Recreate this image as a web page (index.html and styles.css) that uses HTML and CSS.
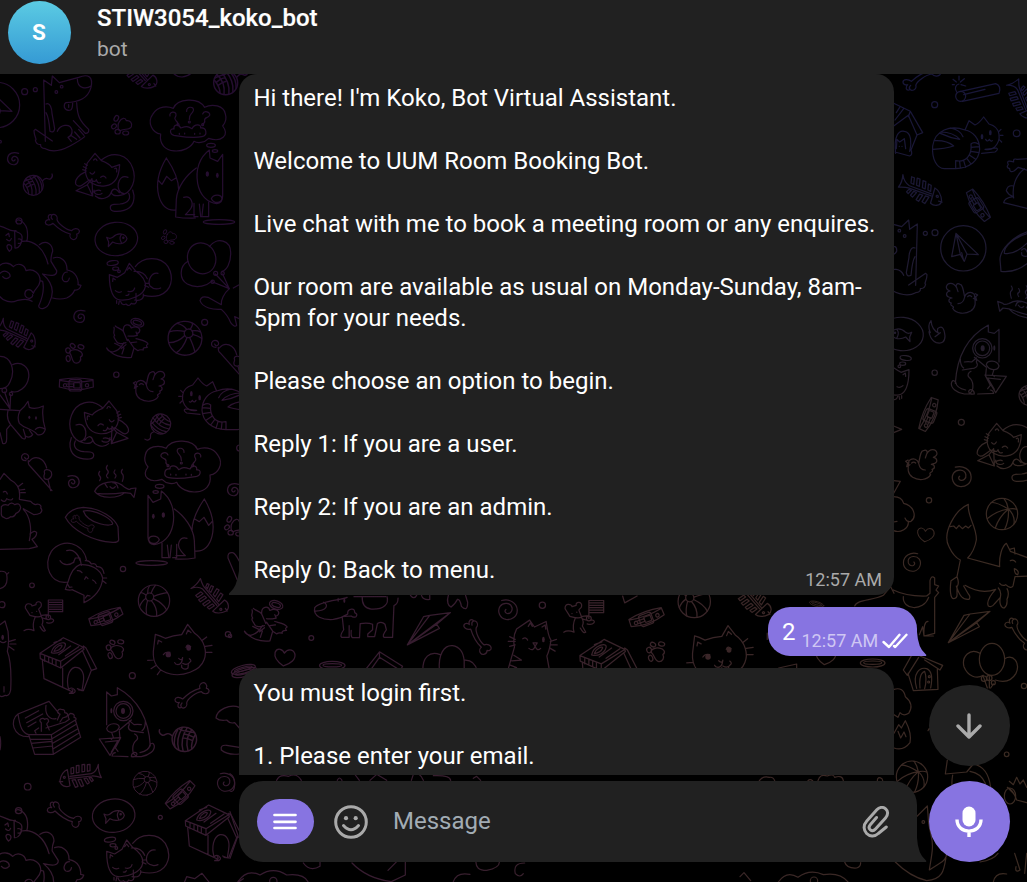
FILE: index.html
```
<!DOCTYPE html>
<html lang="en">
<head>
<meta charset="utf-8">
<title>STIW3054_koko_bot</title>
<link rel="stylesheet" href="styles.css">
</head>
<body>
<div class="app">
<svg class="wallpaper" viewBox="0 0 1027 882" aria-hidden="true">
<defs>
<linearGradient id="base" x1="0" x2="1" y1="0" y2="0"><stop offset="0" stop-color="#34192f"/><stop offset=".35" stop-color="#371c31"/><stop offset=".75" stop-color="#3a2726"/><stop offset="1" stop-color="#3b2b22"/></linearGradient>
<linearGradient id="topLeft" x1="0" x2="0" y1="0" y2="1"><stop offset="0" stop-color="#240d30"/><stop offset=".35" stop-color="#260e30"/><stop offset=".8" stop-color="#34192f" stop-opacity="0"/></linearGradient>
<linearGradient id="topRight" x1="0" x2="0" y1="0" y2="1"><stop offset="0" stop-color="#15143c"/><stop offset=".22" stop-color="#1b1834"/><stop offset=".38" stop-color="#241d2f"/><stop offset=".65" stop-color="#39291f" stop-opacity="0"/></linearGradient>

<g id="bone"><path d="M-30-24C-38-32-31-42-22-38C-18-36-14-30-16-24C-14-12 12 8 28 10C34 2 46 2 50 8C54 15 47 20 43 20C48 30 38 40 30 36C22 32 22 24 24 20C8 16-14 2-28-12C-38-4-50-6-51-14C-51-22-42-24-38-22C-46-30-42-40-34-38"/></g>
<g id="yarn"><circle r="30"/><path d="M-22-20C-8-8-2 10-4 29M-12-27C4-10 10 10 8 28M0-29C14-12 20 6 18 22M-28-6C-20 4-14 16-14 26M-26-12C-14-20 0-18 8-28M-22-2C-12-10-6-12-2-12M-18 6C-10 0-6-2 0-3M12-26C22-14 27-2 26 14M28-14C40-30 44-14 52-20Q60-26 56-34"/></g>
<g id="paw"><path d="M-7-12C-1-24 11-26 14-15C25-17 33-7 29 3C24 14 8 8-2 14C-14 18-12-6-7-12Z"/><ellipse cx="-16" cy="-22" rx="6" ry="9" transform="rotate(30 -16 -22)"/><ellipse cx="-23" cy="2" rx="8" ry="6" transform="rotate(-40 -23 2)"/><ellipse cx="-12" cy="18" rx="8" ry="7"/><ellipse cx="12" cy="22" rx="9" ry="6"/></g>
<g id="ball"><circle r="47"/><circle cx="-13" cy="-11" r="12"/><path d="M-24-17Q-36-26-40-24M-9-22Q-4-36 4-46M-1-13Q24-22 40-24M-2-6Q28 8 38 28M-8 0Q10 20 8 46M-19-1Q-26 22-22 42M-24-7Q-38 2-43 18M-19-21Q-20-36-14-44"/></g>
<g id="beach"><circle r="47"/><path d="M19-15Q-20-38-32-34M19-15Q-16-10-44 14M19-15Q-10 10-20 42M19-15Q22 16 8 46M19-15Q40 4 36 30M19-15Q36-18 44-14M19-15Q16-34 6-46"/></g>
<g id="spiral"><path d="M16-17C0-22-14-18-17-4C-20 10-8 19 4 17C16 14 18-2 8-7C-2-11-8 0-2 5Q4 7 5 2"/></g>
<g id="coil"><path d="M-18-27C4-34 26-20 27 0C28 20 10 30-6 28C-24 24-32 4-23-10C-14-22 8-22 12-6C14 6 4 13-4 10Q-12 5-6-1"/></g>
<g id="collar"><path d="M-50-14Q0-24 50-14L51 8Q0 24-51 8ZM-50-12Q0-2 50-12"/><rect x="-22" y="-14" width="38" height="34" rx="7"/><rect x="-8" y="-5" width="20" height="16" rx="3"/><circle cx="-34" cy="3" r="5"/><circle cx="32" cy="3" r="5"/><path d="M-28-1h20v8h-20"/></g>
<g id="bonefish"><path d="M-60 14C-58-2-48-15-38-18L-30 30C-42 37-60 30-60 14ZM-62 18h10M-30 2L34-6M-30 8L36 1M34-6Q50-12 55-34Q54-12 64 6Q44 0 36 1"/><circle cx="-47" cy="5" r="3"/><path d="M-27-5v-18l8-2v18ZM-11-8v-22l8-1v21ZM6-11v-22l8-1v21ZM22-13v-20l8-1v19ZM-24 13l10 22 8-3-8-20ZM-6 12l10 21 7-3-8-19ZM12 9l10 16 6-4-8-14ZM27 6l8 12 5-4-6-9Z"/></g>
<g id="bird"><path d="M-38-12L-45-8L-39-3L-42 8L-32 2M-35-10C-22-22-8-12-6-2C-2-22 0-40 8-40C18-46 22-36 18-30C28-48 46-46 49-32C49-26 44-22 38-20C50-18 52-6 42-2L32 1C44 2 44 14 34 16C42 24 20 26 30 32C20 50-8 50-24 40C-42 28-38 12-35-10M-6-2Q-2 18 14 18M18-30L14-18M-27-3Q-21-9-15-3"/></g>
<g id="heart"><path d="M-5 24C-20 14-33 0-29-16C-22-31-6-24-2-13C6-26 22-26 28-12C33 4 16 18-5 24Z"/></g>

<g id="fox"><path d="M482 192C458 190 440 158 458 133C474 106 504 108 520 115C532 86 594 80 614 112C636 100 672 106 676 132C680 144 678 156 668 168C690 196 664 218 626 205C612 220 592 220 582 214C566 254 472 258 482 192ZM510 138C506 124 530 122 528 136C526 146 520 142 528 152Q536 158 532 164M560 124C558 108 584 108 580 122C576 134 566 132 568 148M608 132C612 120 632 126 629 136C624 146 612 140 614 152Q616 158 608 162M522 196C508 192 508 174 522 177C520 164 536 160 542 174C560 168 562 168 576 176C584 160 604 162 602 174C620 172 624 196 606 200C576 206 548 200 522 196ZM538 190v3M554 189v3M584 190v3M600 189v3"/><circle cx="534" cy="164" r="3"/><circle cx="568" cy="156" r="3"/><circle cx="608" cy="164" r="3"/><ellipse cx="633" cy="226" rx="13" ry="6"/><ellipse cx="645" cy="243" rx="8" ry="4"/><path d="M499 264C525 302 536 330 536 360M499 264C474 306 468 344 476 376C484 406 502 422 526 420M474 330L486 343L500 319L514 332L529 323M589 294C560 314 532 350 529 388L527 441Q558 446 586 444M628 240C598 262 586 300 593 340C600 378 624 398 650 401C664 400 668 390 668 378V253L653 274L630 264ZM634 386C640 372 664 372 666 386C664 400 642 402 634 386M551 382C572 374 586 402 568 421Q558 432 556 434H584M582 400V440H594M598 402L602 440H612M610 402L606 436M626 396V440H612"/><ellipse class="solid" cx="622" cy="312" rx="5" ry="8"/><ellipse class="solid" cx="652" cy="316" rx="4" ry="8"/><ellipse cx="657" cy="456" rx="47" ry="7"/></g>

<g id="curlcat"><path d="M262 279L285 250L304 272C320 278 330 282 335 292L359 284C358 300 356 316 348 328C334 350 300 354 276 340C256 326 252 302 262 279M304 270C340 240 384 254 398 294C410 326 398 370 360 376Q334 380 334 366C340 352 350 356 358 368M384 322C350 308 344 370 372 371M386 370C394 386 384 400 360 402L342 403C326 405 328 423 344 424C382 426 404 410 402 376L398 360M258 305C236 314 224 330 227 342Q236 354 248 344L268 330M228 362L262 344L278 378ZM262 344L276 326L278 378M282 360C282 378 302 374 306 370M286 378C304 394 330 382 334 366M280 366Q294 358 302 362M344 296Q352 290 350 306M281 270Q288 262 291 272M270 308Q278 318 284 306M302 322Q312 314 318 324M278 332Q286 338 289 329Q292 342 302 338M250 290l10 5M248 299l10 3M254 281l8 5"/></g>

<g id="napcat"><ellipse cx="349" cy="507" rx="64" ry="50" transform="rotate(-6 349 507)"/><path d="M320 502Q330 508 338 502C354 486 376 490 381 506C376 524 352 524 338 516L325 530L326 516ZM364 494Q356 504 364 518"/><circle cx="370" cy="503" r="2"/><ellipse cx="338" cy="579" rx="17" ry="7" transform="rotate(-8 338 579)"/><ellipse cx="347" cy="596" rx="9" ry="5"/><circle cx="357" cy="604" r="4"/><path d="M328 614L352 622Q362 616 374 608L388 580L406 602C432 620 438 636 436 650C432 676 392 692 362 690C336 688 328 660 328 614M338 634L339 624L346 629M382 600L388 592L394 600M406 590C428 560 480 556 504 590C524 624 514 664 478 676Q456 682 432 676M474 610C454 606 442 632 450 648Q464 662 482 654M402 604Q432 602 442 626M346 662Q354 670 364 665M384 664Q400 668 404 654M378 676Q384 678 387 672M408 670V690M436 640l10 0M434 646l12 6M404 690C424 694 432 684 430 672M362 694Q366 708 378 702Q388 712 394 700Q408 706 410 692M350 692l0 8M358 693l-2 10"/></g>

<g id="cloudpup"><path d="M-4 468C20 470 26 486 48 482M48 455C54 440 80 460 82 484Q84 504 80 514M44 482C50 488 66 488 66 500C68 520 56 536 45 534ZM55 520a7 7 0 1 0 0-13M28 544C14 528 24 518 34 528Q38 538 28 544M66 514C100 508 132 534 144 582M118 524C140 508 158 524 158 544Q152 560 153 574L170 602C172 620 150 618 128 612M18 496L26 490L28 500M20 508Q30 518 34 506M-4 590C8 574 30 578 40 590C54 576 74 584 78 602C100 594 122 610 120 634C118 652 104 656 100 670C90 650 70 660 76 678C84 692 100 682 98 674M0 610C14 596 32 608 30 620Q18 632 8 620M96 694C80 682 62 690 50 692C34 700 10 694 0 680M128 612C158 638 164 668 148 698C142 716 118 722 116 708C126 686 134 660 128 634L120 632M160 564C180 556 202 572 201 600C230 604 236 632 234 644L243 646Q238 662 224 660Q218 676 200 684Q180 690 158 684M202 606C188 606 182 628 192 634Q206 638 208 624"/><circle cx="57" cy="453" r="9"/></g>

<g id="house"><path d="M120 190L190 143L250 172L182 214ZM120 190L121 206L182 234L182 214M182 234L252 178L250 172M250 168L258 174L290 236L274 241L248 184M127 210L132 266L188 292V234M134 198v16M146 202v16M157 206v16M168 210v16M206 298C198 270 204 238 224 232C246 230 254 252 250 276L246 302L232 296M274 241L250 302L236 300M188 292L218 306M206 298Q216 290 222 298Q230 304 220 310L208 310Q224 306 216 298M154 188C160 160 200 150 196 166C192 182 172 194 154 188M162 184C166 170 186 160 186 168Q180 182 162 184M176 194L212 168M196 198L236 170M162 158L184 150"/></g>

<g id="catface"><path d="M466 133Q478 136 496 145Q520 136 545 134L563 103L584 130C614 150 622 186 612 210C600 244 546 260 512 252C472 244 458 216 460 184ZM473 162L475 151L485 156M559 132L564 120L573 128M443 211l18-1M453 236l16-10M472 254l10-14M616 169l20-3M616 187l20 0M607 151l13-10M536 205Q546 214 548 203Q546 224 534 224Q526 224 524 218M548 220Q562 228 570 216Q576 212 568 206M545 225V232Q554 242 564 234L565 224"/><ellipse class="solid" cx="505" cy="194" rx="8" ry="8"/><path d="M490 194Q496 184 510 187M558 172Q562 160 572 170"/><ellipse class="solid" cx="566" cy="174" rx="7" ry="8"/></g>

<g id="mouseflag"><path d="M76 54C74 36 96 40 96 48L108 44C106 32 126 32 124 46C124 54 116 54 116 58L124 78C116 84 104 80 90 76ZM106 80Q96 102 102 122Q84 114 72 122M124 80Q132 92 126 104L136 122Q130 128 120 110M126 76L144 74M128 84L142 88M138 82a7 7 0 1 0 14 0a7 7 0 1 0-14 0M145 30V82M145 30H188V65H145M145 37H188M145 44H188M145 51H188M145 58H188M152 86C170 88 158 104 140 98"/><circle class="solid" cx="96" cy="68" r="2"/><circle class="solid" cx="110" cy="64" r="2"/></g>

<g id="sleuth"><path d="M320 306L334 318L352 314V293C408 324 446 380 451 468M320 306V404M320 416C324 432 350 430 358 412C356 398 326 396 320 416M358 420L394 390M386 396L388 404C380 416 390 424 404 424L430 428M436 394Q436 416 426 422M388 392L402 404Q412 402 424 404M336 430L340 442L334 448M358 424L360 444M298 447L362 443L330 496ZM316 456L354 452L334 486M362 443L346 474L354 484M404 432C412 436 416 444 410 450C394 462 396 490 406 496M346 488Q338 488 336 498L384 500M394 500C394 486 408 484 411 492Q410 502 394 500L424 500C448 496 464 482 463 468Q460 454 450 464Q448 482 420 488"/><circle cx="370" cy="363" r="29"/><circle cx="370" cy="363" r="22"/><ellipse class="solid" cx="369" cy="363" rx="6" ry="9"/><ellipse class="solid" cx="334" cy="362" rx="3" ry="8"/></g>

<g id="angel"><path d="M68 68C74 74 86 76 92 84C90 60 112 60 116 74C130 66 146 74 140 86Q132 94 130 86L134 96Q116 100 106 98M64 72C68 84 58 86 66 96C60 100 68 108 70 112C74 124 90 122 100 118M92 84L104 112M66 120L94 134L88 152M130 106C144 110 162 112 166 122Q158 126 164 132Q148 132 152 140Q140 138 136 142L124 134M106 108L124 134L116 162C90 166 58 156 42 134Q46 144 60 146C72 144 86 132 94 118M116 118L132 116M100 124L86 136"/><ellipse cx="134" cy="58" rx="20" ry="12" transform="rotate(18 134 58)"/><ellipse cx="134" cy="58" rx="13" ry="6" transform="rotate(18 134 58)"/></g>

<g id="dog"><path d="M131 30L154 46L157 18L178 38L236 22C266 10 280 22 273 52C264 86 236 96 198 98Q192 100 193 112Q198 124 212 120Q218 116 218 98M206 112v-8M232 26C232 60 262 56 273 48M131 30L136 214M138 102C150 96 156 116 156 130L164 176Q162 190 150 184Q146 140 138 128M230 98C232 140 240 154 266 178Q268 190 256 190L220 152M172 184C180 164 210 158 216 180Q218 196 204 202L214 214M157 213L106 178L102 182C102 198 112 210 106 210Q108 224 122 224Q120 234 136 236C154 246 180 244 210 228Q240 212 254 200M212 196L230 208M224 186L240 204M236 178L252 196"/><circle cx="185" cy="50" r="4"/><circle cx="169" cy="66" r="4"/></g>
<g id="plane"><circle cx="235" cy="535" r="68"/><path d="M213 490L200 560L226 553L238 574L246 552L280 554ZM213 490L226 553M213 490L246 552M230 548L236 572"/></g>
<g id="loaf"><path d="M240 180L252 152L270 165Q282 160 296 141L312 162C350 172 348 210 330 230Q318 242 300 238L334 234Q342 238 330 246L290 250M240 180C196 164 150 180 143 228C140 268 156 296 178 296L212 296C254 294 282 272 284 238C284 206 264 184 240 180M168 186Q204 186 224 208Q196 204 166 190M148 212Q186 210 206 228Q180 236 144 238M196 174Q226 180 234 200M212 296V272C242 278 262 256 258 222Q266 214 280 222M224 274l2 20M236 272l6 20M246 266l12 16M254 256l18 12M258 244l24 4M258 232l24-2M302 208Q308 218 313 208Q318 216 322 212M342 184l6-6M346 196h8M342 208l8 8"/><ellipse class="solid" cx="291" cy="200" rx="4" ry="8"/><ellipse class="solid" cx="316" cy="188" rx="4" ry="8"/></g>
<g id="balloons"><ellipse cx="605" cy="565" rx="42" ry="47" transform="rotate(-20 605 565)"/><path d="M628 530C650 500 694 508 692 552C692 580 680 600 666 604M564 574C536 590 538 628 562 642C592 658 622 646 638 632M646 612L688 656L638 636M668 612L688 656"/><circle cx="647" cy="610" r="6"/><circle cx="668" cy="610" r="5"/><circle cx="638" cy="635" r="5"/></g>
<g id="bowl"><path d="M196 562Q212 534 250 532C304 534 344 566 354 590L356 630Q354 638 338 637C280 634 216 602 196 562M250 543C280 536 332 564 338 580C340 592 264 584 250 543"/><use href="#bone" transform="translate(248 582) scale(.68)"/></g>
<g id="mousey"><path d="M78 392Q62 392 65 378C72 364 90 374 85 384Q78 392 74 382M85 392Q84 404 90 408L156 482M88 394C104 374 132 382 140 414M134 430C128 418 146 414 154 426C158 438 150 446 144 448L152 482M134 430Q126 450 144 448"/></g>
<g id="cookfish"><path d="M284 484C296 456 344 444 374 472Q390 482 392 476L408 474L402 502L392 490L374 488C356 506 300 508 284 484ZM314 460L322 472M338 458Q350 458 354 474M330 470Q338 480 346 470M290 490Q330 494 372 488M299 424q-6 8 0 14t0 14M322 406q-6 8 0 14t0 12t2 12M345 420q-6 8 0 12t0 12M367 418q-6 8 0 14t0 22"/></g>
<g id="paperplane"><path d="M515 174L562 92L580 88L640 80L600 114L608 126ZM515 174L580 88M515 174L640 80M515 174L600 114"/></g>
<g id="foxwalk"><path d="M250 523C210 540 170 610 192 650Q206 680 226 690L216 740L198 752C194 780 196 806 206 806Q218 804 216 790V770Q224 760 216 740M250 523C246 560 276 590 274 630Q268 664 248 684L344 710C342 680 350 650 364 640L376 664L430 684M196 590L206 588L214 596L222 586L232 596L242 588L250 594L258 586M214 768C224 802 236 810 252 808Q258 800 250 792L236 768M240 766C270 784 300 790 332 778M332 778C312 800 304 816 310 828Q320 834 328 822L346 802Q350 784 340 774M346 802C342 820 348 834 358 834Q368 826 366 808Q374 790 366 776M344 760Q352 770 362 764Q378 778 384 768L390 740L430 738M374 658L388 654L390 672M376 692Q386 688 392 696M388 716Q404 722 398 734Q388 732 388 716"/></g>
<g id="bigdog"><path d="M360 34L452 34M340 36C326 44 260 46 246 66C240 92 270 102 300 100Q324 96 342 84Q340 72 352 70Q362 68 362 80Q372 84 366 92Q358 96 352 90L326 92M272 50C286 56 284 74 248 76M384 34Q382 66 410 70C448 72 462 54 456 34M326 94L330 130Q318 148 324 152H346V118M352 132Q350 150 356 153H376L378 112Q400 108 414 114V130L400 142V150H420L428 112Q440 104 450 114L454 130Q440 148 448 152H472L476 60Q488 56 488 38"/><ellipse class="solid" cx="314" cy="43" rx="2" ry="6"/><ellipse class="solid" cx="332" cy="46" rx="3" ry="6"/></g>
<g id="ring"><ellipse rx="37" ry="12"/><ellipse cy="-1" rx="27" ry="5"/></g>
<g id="standcat"><path d="M806 250L826 180Q820 150 832 128L870 102L884 122L918 106Q924 150 932 160Q928 190 920 206L928 250M866 120L872 110L878 120M906 122l9-6 2 12M850 156Q860 150 864 160M868 184Q880 194 886 178Q892 194 902 184M880 168L892 168L886 178ZM812 150l16 8M808 164h20M812 178l16-4M930 164l18-6M930 174h20M930 184l14 8M824 204L846 218L818 220M812 232L832 240L808 250"/><ellipse class="solid" cx="910" cy="158" rx="4" ry="8"/></g>

<mask id="doodles" maskUnits="userSpaceOnUse" x="0" y="0" width="1027" height="882">
<g class="ink">
<g transform="translate(0 70) scale(.33333)">
<use href="#dog"/><use href="#plane" transform="translate(-244 -430)"/><circle cx="74" cy="65" r="9"/><circle cx="106" cy="59" r="6"/>
<use href="#bonefish" transform="translate(417 8) rotate(-125)"/><path d="M520 10Q545 32 574 10"/>
<use href="#yarn" transform="translate(677 38) scale(1.2)"/><use href="#paw" transform="translate(365 167)"/><use href="#fox"/>
<use href="#spiral" transform="translate(40 267)"/><use href="#curlcat"/><use href="#yarn" transform="translate(100 346)"/>
<use href="#bone" transform="translate(187 472)"/><use href="#cloudpup"/><use href="#napcat"/><use href="#paw" transform="translate(507 502) scale(.75)"/>
<use href="#balloons"/><path d="M688 656C672 670 662 690 664 704L624 682Q604 676 600 692C608 714 640 720 664 718Q684 736 692 758Q704 774 710 766L704 740L726 750M700 654L716 645"/>
<use href="#spiral" transform="translate(239 740)"/><circle cx="614" cy="757" r="9"/><circle cx="0" cy="215" r="4"/>
</g>
<g transform="translate(0 330) scale(.33333)">
<use href="#bonefish" transform="translate(52 14) rotate(198) scale(1 -1)"/><use href="#paw" transform="translate(224 70) rotate(80)"/>
<use href="#angel" transform="translate(278 -80)"/><use href="#ball" transform="translate(555 25) scale(1.08) rotate(85)"/>
<use href="#mousey" transform="translate(570 -340)"/><use href="#collar" transform="translate(229 163)"/><circle cx="349" cy="134" r="8"/>
<use href="#bird" transform="translate(445 167)"/><use href="#loaf" transform="matrix(-1 0 0 1 890 3)"/>
<path d="M0 79C32 78 48 120 30 156Q22 176 0 176M38 104C64 92 90 112 86 142C82 172 54 192 34 184M14 186L30 236M32 194L30 236M-2 192L30 236M0 238L60 242Q74 232 84 214L88 232Q106 240 130 228Q124 260 136 298Q130 318 112 314C100 296 76 298 58 280Q50 262 60 242M24 242Q18 266 32 284L66 324Q78 332 76 318L70 298M76 318Q90 326 98 314L88 300M0 308L8 340Q20 344 20 326V298L30 286M106 298Q118 286 136 298"/>
<circle cx="13" cy="181" r="7"/><circle cx="33" cy="192" r="5"/><ellipse class="solid" cx="88" cy="262" rx="3" ry="5"/><ellipse class="solid" cx="108" cy="264" rx="3" ry="5"/>
<use href="#curlcat" transform="matrix(-1 0 0 1 612 -37)"/><use href="#yarn" transform="translate(482 282) scale(-1 1) rotate(75)"/><use href="#fox" transform="matrix(-1 0 0 1 1112 243)"/>
<use href="#mousey"/><use href="#spiral" transform="translate(220 456) scale(-1 1)"/><use href="#cookfish"/><use href="#bowl"/>
<path d="M0 448L12 430L32 450C56 462 62 480 58 506M58 508L92 514Q104 528 112 522Q126 524 122 534Q130 542 120 550Q112 554 102 554L70 536M54 470l14-10M60 480l14-2M62 488h14M10 486Q18 480 22 492M4 510Q16 520 20 506Q34 514 38 506M4 530Q12 520 24 526Q34 514 44 524Q58 516 62 532Q60 546 48 550Q42 564 32 560Q20 570 12 562Q2 560 4 546ZM70 538C92 560 96 600 88 632M90 612Q104 598 110 608Q110 620 96 628L112 650L88 656L0 658"/>
<path d="M204 756C150 764 128 704 154 664C186 622 250 636 260 692M180 692C190 708 210 706 222 696M200 662C220 656 236 672 240 692M204 756L196 778Q210 782 216 779L252 796V818C282 804 306 778 308 744C302 718 272 702 240 704Q216 712 204 756M220 698L226 684H240L244 706M256 692Q268 690 274 702Q288 698 290 710Q308 708 312 730M204 764l4 8 8-1M256 804l6-8 8 2M232 722Q240 720 246 728M278 750Q286 754 288 760M254 748l4-8 6 6M308 744h12M308 752l10 8"/>
<circle cx="369" cy="717" r="8"/><circle cx="96" cy="766" r="7"/><path d="M0 724Q18 722 20 734L26 728M20 734Q26 770 0 776"/>
<use href="#spiral" transform="translate(700 480)"/><use href="#paw" transform="translate(704 590)"/><circle cx="719" cy="354" r="9"/><path d="M712 750L684 684Q682 666 698 668Q706 670 718 694"/>
</g>
<g transform="translate(0 590) scale(.33333)">
<use href="#mouseflag"/><circle cx="6" cy="44" r="9"/><use href="#collar" transform="translate(318 82) rotate(-20)"/>
<use href="#ball" transform="translate(462 32)"/><use href="#bonefish" transform="translate(632 22) rotate(-124)"/><use href="#house"/><use href="#paw" transform="translate(347 178) rotate(70)"/>
<use href="#catface"/><circle cx="684" cy="133" r="8"/><circle cx="397" cy="257" r="9"/><use href="#bone" transform="translate(576 315) scale(1 -1)"/>
<use href="#sleuth"/><path d="M0 104L15 93L24 124Q28 160 22 184C32 210 34 260 32 300Q28 320 16 316Q6 322 0 318M28 154l18-5M30 162l18 0M28 170l14 10M12 290v16M0 154Q10 162 18 154M0 440Q4 460 0 480"/><ellipse class="solid" cx="8" cy="142" rx="4" ry="8"/>
<path d="M85 440C38 440 28 390 54 372L147 334L180 374M54 372C60 410 66 430 86 434L104 493H160L242 442L226 390L154 434H86M154 434L160 493M90 448H152M94 460L156 454M98 474L158 468M156 446L230 402M158 460L234 416M160 476L238 428M138 346C134 370 146 390 168 386M76 384L116 362M80 398L128 372M84 410L108 396M124 424V398C112 390 128 380 134 388Q144 382 146 394L140 402L148 420M172 390L180 372C166 368 174 356 184 358Q196 358 194 368Q208 370 200 380L188 384L180 396M108 430L104 422L116 414M138 414L196 396L208 388Q200 376 212 370Q226 372 222 382Q232 384 226 392"/>
<use href="#yarn" transform="translate(553 448) scale(-1.22 1.22) rotate(10)"/><path d="M718 352C690 340 650 360 648 384Q660 394 680 390Q690 402 704 398L718 414M718 472L680 466Q660 464 664 480C680 494 700 494 718 492"/>
<use href="#ring" transform="translate(730 238) rotate(-15)"/><use href="#bonefish" transform="translate(240 557)"/><use href="#ball" transform="translate(435 580) scale(.77) rotate(80)"/><use href="#collar" transform="translate(542 616) rotate(-43)"/>
<use href="#coil" transform="translate(678 577) scale(.95)"/><circle cx="83" cy="590" r="10"/><circle cx="481" cy="682" r="6"/><use href="#bone" transform="translate(193 675)"/>
<use href="#napcat" transform="translate(-8 170)"/><use href="#cloudpup" transform="translate(-4 209) scale(1.05 1)"/><use href="#house" transform="translate(436 502)"/><path d="M552 880L560 860L584 866L606 850L630 880M712 878L730 866"/>
</g>
<g transform="translate(885 70) scale(.33333)">
<use href="#bone" transform="translate(110 22) scale(1.1 -1)"/><path d="M224 65L332 41Q350 48 342 70L232 94M236 74L300 58M215 66C206 54 214 44 222 42M226 36l12-10M228 44l14 4M222 30v-12M214 36l-10-8M208 44h-6"/><ellipse cx="227" cy="79" rx="15" ry="15"/><circle cx="149" cy="104" r="9"/>
<use href="#bonefish" transform="translate(412 90) rotate(-105)"/><circle cx="395" cy="190" r="10"/><use href="#loaf"/>
<path d="M26 100L76 124L113 188L96 195L70 136L26 168M76 124L70 140M96 195L78 240M32 250C26 200 40 180 58 184C80 186 80 220 74 244M34 236L36 208L44 216L58 206L62 236M78 240Q84 254 74 258L30 246M30 150L56 116M34 128L44 112"/><circle class="solid" cx="43" cy="229" r="2"/><circle class="solid" cx="51" cy="229" r="2"/>
<path d="M430 266L396 268Q384 264 386 276Q362 268 370 284Q362 292 374 296Q374 310 388 302L400 292L430 302M418 296C392 316 380 350 386 384M386 348Q368 344 364 362Q370 374 384 380Q358 384 356 398L430 416"/>
<use href="#bonefish" transform="matrix(-1.05 -.26 -.1 1 108 362)"/><use href="#collar" transform="translate(278 407) rotate(58)"/>
<use href="#dog" transform="matrix(-1 0 0 1 228 432)"/><circle cx="150" cy="488" r="9"/><circle cx="121" cy="490" r="6"/><use href="#plane"/>
<path d="M430 484C380 500 346 540 345 568L348 604Q390 610 430 578M430 490C386 502 356 530 358 550Q390 556 430 516M410 540Q422 530 426 546M410 548Q408 562 428 558"/>
<use href="#bird" transform="matrix(-1 0 0 1 233 683)"/><use href="#cookfish" transform="matrix(-1 -.25 0 1 746 322)"/>
<path d="M138 752Q126 768 136 788C128 770 132 810 154 818Q180 824 180 798Q176 760 158 776Q156 788 162 790Q140 780 138 752M150 800l16-12"/>
</g>
<g transform="translate(885 330) scale(.33333)">
<use href="#napcat" transform="matrix(-1 0 0 1 400 -495)"/><use href="#sleuth" transform="matrix(-1 0 0 1 662 -308)"/><circle cx="149" cy="128" r="8"/><circle cx="229" cy="277" r="9"/>
<use href="#collar" transform="translate(133 254) rotate(-68)"/><use href="#yarn" transform="translate(432 196)"/><path d="M26 288L50 298L26 308M26 452L46 454L26 490M26 500Q50 500 56 520C88 528 96 560 78 574Q66 578 60 564M70 574C72 596 46 610 26 602M26 576l10-2"/>
<use href="#curlcat" transform="translate(50 30)"/><use href="#bird" transform="translate(107 402)"/><use href="#coil" transform="translate(230 440) scale(1.05)"/><circle cx="132" cy="511" r="8"/>
<use href="#beach" transform="translate(351 552)"/><use href="#heart" transform="translate(123 615) scale(.85)"/><use href="#coil" transform="translate(81 697) scale(-.95 .95)"/><use href="#foxwalk"/>
</g>
<g transform="translate(740 560) scale(.33333)">
<path d="M460 90Q500 110 560 108L570 100V62Q574 44 584 54V74L596 78L588 90L596 98L584 112V220L552 228L548 200L538 224M344 138C350 118 400 122 430 106L452 80L462 100M490 110C486 150 550 156 566 112M564 184Q550 184 552 228H580"/>
<use href="#bonefish" transform="translate(40 122) rotate(-124)"/><use href="#ring" transform="translate(230 132) scale(.6) rotate(15)"/><use href="#paperplane" transform="translate(110 74)"/><use href="#bone" transform="translate(838 223) rotate(20)"/>
<ellipse cx="756" cy="298" rx="38" ry="48"/><path d="M720 280C690 262 664 290 672 320C684 350 710 358 730 346M794 296C820 282 842 308 828 340Q808 374 766 360M730 350L742 384M748 350V384M760 372L752 384"/><circle cx="732" cy="356" r="8"/><circle cx="748" cy="354" r="8"/><circle cx="760" cy="368" r="6"/>
<circle cx="852" cy="378" r="8"/><path d="M516 284L490 330L502 346L536 292M540 288L608 316L600 330L554 300M504 340L520 392L594 388L592 328M530 385C516 340 540 320 560 326C580 334 576 364 572 384M540 384Q536 340 554 334Q562 356 554 386"/><circle cx="568" cy="350" r="3"/><circle cx="566" cy="366" r="3"/>
<use href="#heart" transform="translate(258 290)"/><use href="#ring" transform="translate(398 309)"/><path d="M116 324L170 312V324M462 388Q490 380 496 410Q524 432 506 460Q490 470 480 458L474 472L462 464M462 520L476 494L484 504L496 482Q516 520 510 548Q490 574 462 564M474 514L482 534L492 516L498 530"/>
<circle cx="800" cy="583" r="7"/><use href="#beach" transform="translate(516 650)"/><path d="M622 600L616 642L680 636L700 612Q744 620 752 682M638 645Q630 690 650 710M690 634Q724 640 736 670M860 728L830 720Q820 690 802 682L820 700M808 664L820 674L830 652L840 672L850 660L860 682M564 512Q570 500 568 508"/><ellipse cx="810" cy="708" rx="17" ry="24"/>
<path d="M530 770L562 738L566 790L574 830C582 860 574 890 568 930L596 912Q620 900 620 880C612 920 616 958 560 962Q510 950 466 906M824 880L840 930Q824 940 828 920M860 880L854 940M314 906Q320 926 350 924Q362 920 362 908M115 966Q140 930 174 952Q210 926 250 944Q300 936 324 966M760 966Q766 936 800 942M0 950l12-12 20 24M720 906Q760 900 774 880"/><circle cx="222" cy="962" r="11"/><circle cx="550" cy="786" r="4"/>
<path d="M58 662Q70 646 88 652Q100 650 104 662M204 662q6-6 14 0M234 662Q240 640 262 648Q280 640 284 652Q308 644 310 662M412 662q0-14 14-6l2 6"/>
</g>
<g transform="translate(230 585) scale(.3444)">
<use href="#angel"/><use href="#bigdog"/><circle cx="236" cy="154" r="7"/><use href="#heart" transform="translate(160 211)"/><use href="#ring" transform="translate(297 234)"/><use href="#ring" transform="translate(42 254) rotate(-15)"/>
<use href="#paperplane"/><path d="M524 30Q534 44 542 30M556 30Q560 44 580 42V30M634 30C628 48 634 62 642 64Q656 52 660 42Q668 40 672 62Q690 80 690 50L684 30M390 250L434 194L501 236L494 250M434 194V210L406 250M434 210L488 244M560 250C558 210 580 190 610 202M608 250C604 200 622 174 646 176Q676 180 680 220V250M680 218Q710 216 718 250"/>
<use href="#bone" transform="translate(718 152) rotate(28)"/><use href="#coil" transform="translate(807 72)"/><circle cx="907" cy="59" r="9"/><use href="#standcat"/><use href="#mouseflag" transform="translate(897 15)"/><use href="#house" transform="translate(896 15)"/><use href="#collar" transform="translate(1210 96) rotate(-20)"/>
<use href="#paw" transform="translate(1238 194) rotate(70)"/><use href="#ball" transform="translate(1348 48)"/><use href="#catface" transform="translate(883 15)"/><path d="M1140 32L1146 52L1182 32M1560 140v18"/><circle cx="0" cy="148" r="5"/>
</g>
<g transform="translate(230 765) scale(.33333)"><path d="M140 46Q148 26 176 34Q200 22 214 46M322 46q6-14 14 0M376 30L388 46M420 46L440 28L470 46M544 46L550 28Q570 20 580 46M610 32Q660 30 662 46M730 40L740 34L752 46M0 26Q16 36 14 60T0 78M0 140L24 212L0 280M220 294Q240 322 270 304V290M366 294Q410 340 484 350L526 330V290M474 316L500 290M738 290Q736 316 770 316Q810 308 808 290M24 350Q50 310 90 330Q130 304 170 330Q220 324 234 350M670 350Q680 320 720 328M884 294Q848 294 856 326Q870 340 880 326"/><circle cx="130" cy="348" r="11"/></g>
</g>
</mask>
</defs>
<g mask="url(#doodles)"><rect width="1027" height="882" fill="url(#base)"/><rect width="560" height="882" fill="url(#topLeft)"/><rect x="560" width="467" height="882" fill="url(#topRight)"/></g>
</svg>

<header class="header">
<div class="avatar">S</div>
<div class="peer"><div class="name">STIW3054_koko_bot</div><div class="status">bot</div></div>
</header>

<main class="messages">
<article class="bubble incoming first">
<p>Hi there! I'm Koko, Bot Virtual Assistant.</p>
<p>Welcome to UUM Room Booking Bot.</p>
<p>Live chat with me to book a meeting room or any enquires.</p>
<p>Our room are available as usual on Monday-Sunday, 8am-<br>5pm for your needs.</p>
<p>Please choose an option to begin.</p>
<p>Reply 1: If you are a user.</p>
<p>Reply 2: If you are an admin.</p>
<p>Reply 0: Back to menu.</p>
<time class="stamp">12:57 AM</time>
<svg class="tail tail-left" viewBox="0 0 10 24"><path d="M10 0V24H0Q-.7 23 .5 22Q8 16 10 0Z"/></svg>
</article>
<article class="bubble outgoing">
<span>2</span><time class="sent">12:57 AM</time>
<svg class="checks" viewBox="0 0 26 16"><path d="M1.500 9L7 14L17.500 1.800M12 13L13.200 14L24.500 1.800"/></svg>
<svg class="tail tail-right" viewBox="0 0 10 24"><path d="M0 0V24H9Q10 23 8.500 22Q1 16 0 0Z"/></svg>
</article>
<article class="bubble incoming">
<p>You must login first.</p>
<p>1. Please enter your email.</p>
</article>
</main>

<footer class="footer">
<div class="composer">
<button class="menu" aria-label="Menu"><svg viewBox="0 0 24 17"><path d="M1.500 2H22.500M1.500 8.800H22.500M1.500 15H22.500"/></svg></button>
<svg class="smile" viewBox="0 0 34 34"><circle cx="17" cy="17" r="15.300"/><path d="M9.500 20.500Q17 29 24.500 20.500"/><circle class="eye" cx="12" cy="13.200" r="2.100"/><circle class="eye" cx="21.700" cy="13.200" r="2.100"/></svg>
<span class="placeholder">Message</span>
<svg class="clip" viewBox="0 0 28 32"><path d="M14.500 11.500L8.300 18.700C5 22.700 10 27 13.500 23L23.500 12C29.800 4.800 20.500-2.500 14.800 3.800L4.800 15C-3.200 24 8.500 35 16.300 27.500L24.300 21"/></svg>
<svg class="tail tail-right" viewBox="0 0 10 24"><path d="M0 0V24H9Q10 23 8.500 22Q1 16 0 0Z"/></svg>
</div>
<button class="round mic" aria-label="Record"><svg viewBox="0 0 28 32"><rect x="7.500" y=".500" width="13" height="20" rx="6.500"/><path d="M2 13.500C2 29 26 29 26 13.500M14 25V31"/></svg></button>
<button class="round down" aria-label="Scroll down"><svg viewBox="0 0 26 26"><path d="M13 2V24M2 13L13 24L24 13"/></svg></button>
</footer>
</div>
</body>
</html>
```

FILE: styles.css
```
* { box-sizing: border-box; }
body { margin: 0; background: #000; font-family: Roboto, "Liberation Sans", sans-serif; color: #fff; }
button { border: 0; padding: 0; }
.app { position: relative; display: flex; flex-direction: column; width: 1027px; height: 882px; overflow: hidden; background: #000; isolation: isolate; }
.wallpaper { position: absolute; inset: 0; width: 1027px; height: 882px; z-index: -1; }
.ink { fill: none; stroke: #fff; stroke-width: 3.6; stroke-linecap: round; stroke-linejoin: round; }
.solid { fill: #fff; stroke: none; }

.header { flex: none; display: flex; align-items: flex-start; gap: 26px; height: 74px; padding: 1px 8px 0; background: #212121; }
.avatar { display: grid; place-items: center; width: 63px; height: 63px; padding: 0 1px 2px 0; border-radius: 50%; background: linear-gradient(#5bcbe3, #359ad4); font-size: 22.5px; font-weight: 700; }
.peer { padding-top: 2px; }
.name { font-size: 24px; line-height: 31px; font-weight: 500; white-space: nowrap; -webkit-text-stroke: .2px #fff; }
.status { font-size: 21px; line-height: 30px; color: #aaa; }

.messages { flex: none; display: flex; flex-direction: column; gap: 12px; height: 701px; padding-left: 229px; overflow: hidden; }
.bubble { position: relative; flex: none; font-size: 24px; line-height: 31.5px; }
.bubble p { margin: 0 0 31.5px; white-space: nowrap; }
.incoming { width: 655px; margin-left: 10px; padding: 10px 14.4px 9px; border-radius: 22px 22px 0 0; background: #212121; }
.incoming.first { height: 521px; padding-top: 8.5px; border-radius: 18px 18px 18px 0; }
.stamp { position: absolute; right: 12px; bottom: 3px; font-size: 18px; line-height: 24px; color: #aaa; }
.outgoing { display: flex; align-self: flex-end; width: 149px; height: 49px; margin-right: 110px; padding: 10px 10px 0 14px; border-radius: 22px 22px 0 22px; background: #8774e1; }
.sent { margin: 12px 0 0 6px; font-size: 18px; line-height: 24px; color: #cfc7f3; white-space: nowrap; }
.checks { flex: none; width: 26px; height: 16px; margin: 16px 0 0 4px; fill: none; stroke: #fff; stroke-width: 2.4; stroke-linecap: round; stroke-linejoin: round; }
.tail { position: absolute; bottom: 0; width: 10px; height: 24px; }
.tail-left { right: 100%; fill: #212121; }
.tail-right { left: 100%; fill: #8774e1; }
.composer .tail-right { fill: #212121; }

.footer { position: relative; display: flex; gap: 12px; height: 81px; margin: 6px 0 0 239px; }
.composer { position: relative; display: flex; align-items: center; width: 678px; height: 81px; padding: 0 27px 0 18px; border-radius: 24px 24px 0 24px; background: #212121; }
.menu { display: grid; place-items: center; width: 57px; height: 45px; padding-right: 1px; border-radius: 22.5px; background: #8774e1; }
.menu svg { width: 24px; height: 17px; fill: none; stroke: #fff; stroke-width: 2.7; stroke-linecap: round; }
.smile { width: 34px; height: 34px; margin-left: 20px; fill: none; stroke: #aaa; stroke-width: 3; stroke-linecap: round; }
.eye { fill: #aaa; stroke: none; }
.placeholder { margin-left: 25px; padding-bottom: 2px; font-size: 24px; line-height: 32px; color: #a2acb4; }
.clip { width: 28px; height: 32px; margin-left: auto; fill: none; stroke: #aaa; stroke-width: 3; stroke-linecap: round; stroke-linejoin: round; }
.round { display: grid; place-items: center; width: 81px; height: 81px; padding-right: 1px; border-radius: 50%; }
.mic { background: #8774e1; }
.mic svg { width: 28px; height: 32px; fill: #fff; }
.mic path { fill: none; stroke: #fff; stroke-width: 3.4; }
.down { position: absolute; left: 690px; bottom: 96px; background: #212121; }
.down svg { width: 26px; height: 26px; fill: none; stroke: #aaa; stroke-width: 3.4; stroke-linecap: round; stroke-linejoin: round; }
```
